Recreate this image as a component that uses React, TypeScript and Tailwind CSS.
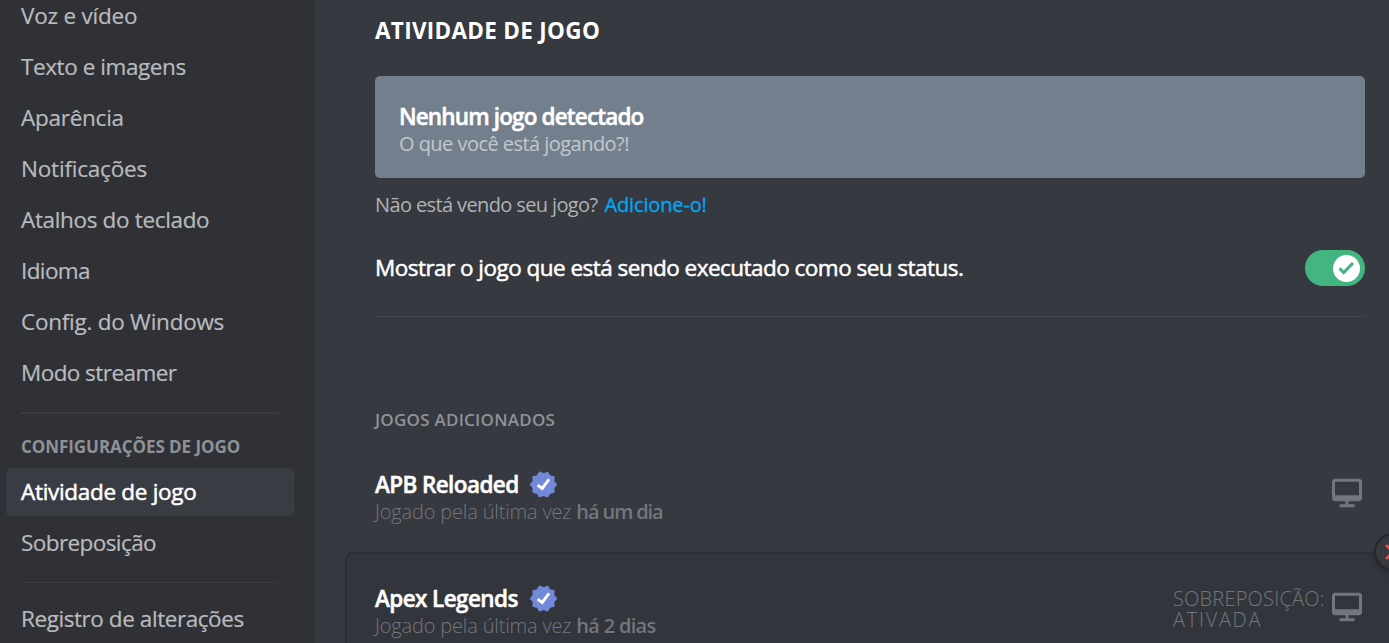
import clsx from "clsx";

const userItems = [
  { label: "Voz e vídeo", tracking: "tracking-[-0.22px]" },
  { label: "Texto e imagens", tracking: "tracking-[-0.42px]" },
  { label: "Aparência", tracking: "tracking-[-0.25px]" },
  { label: "Notificações", tracking: "tracking-[-0.2px]" },
  { label: "Atalhos do teclado", tracking: "tracking-[-0.34px]" },
  { label: "Idioma", tracking: "tracking-[-0.6px]" },
  { label: "Config. do Windows", tracking: "tracking-[-0.25px]" },
  { label: "Modo streamer", tracking: "tracking-[-0.56px]" },
];

const gameItems = [
  { label: "Atividade de jogo", tracking: "tracking-[-0.3px]", active: true },
  { label: "Sobreposição", tracking: "tracking-[-0.58px]" },
];

type ItemProps = { label: string; tracking?: string; active?: boolean };

function NavItem({ label, tracking, active }: ItemProps) {
  return (
    <a
      className={clsx(
        "flex h-12 shrink-0 items-center rounded-[5px] pb-px pl-[15px] text-[22.5px] whitespace-nowrap",
        active
          ? "bg-[#393c43] text-white [-webkit-text-stroke:0.5px_#fff]"
          : "text-[#b9bbbe] [-webkit-text-stroke:0.2px_#b9bbbe]",
        tracking
      )}
    >
      {label}
    </a>
  );
}

function VerifiedBadge() {
  return (
    <svg width="27" height="27" viewBox="0 0 16 15.2" className="shrink-0">
      <path
        fill="#7289da"
        fillRule="evenodd"
        d="m16 7.6c0 .79-1.28 1.38-1.52 2.09s.44 2 0 2.59-1.84.35-2.46.8-.79 1.84-1.54 2.09-1.67-.8-2.47-.8-1.75 1-2.47.8-.92-1.64-1.54-2.09-2-.18-2.46-.8.23-1.84 0-2.59-1.54-1.3-1.54-2.09 1.28-1.38 1.52-2.09-.44-2 0-2.59 1.85-.35 2.48-.8.78-1.84 1.53-2.12 1.67.83 2.47.83 1.75-1 2.47-.8.91 1.64 1.53 2.09 2 .18 2.46.8-.23 1.84 0 2.59 1.54 1.3 1.54 2.09z"
      />
      <path
        fill="#fff"
        d="M7.4 11.17 4 8.62l1-1.36 2 1.53L10.64 4l1.36 1z"
      />
    </svg>
  );
}

function Monitor() {
  return (
    <svg width="36" height="36" viewBox="0 0 24 24" className="shrink-0">
      <path
        fill="#72767d"
        d="M4 2.5C2.897 2.5 2 3.397 2 4.5V15.5C2 16.604 2.897 17.5 4 17.5H11V19.5H7V21.5H17V19.5H13V17.5H20C21.103 17.5 22 16.604 22 15.5V4.5C22 3.397 21.103 2.5 20 2.5H4ZM20 4.5V13.5H4V4.5H20Z"
      />
    </svg>
  );
}

type GameProps = { name: string; nameTracking?: string; last: string; lastTracking?: string };

function GameInfo({ name, nameTracking, last, lastTracking }: GameProps) {
  return (
    <div>
      <div className="flex h-[30px] items-center gap-3">
        <span
          className={clsx(
            "w-[143px] pt-px text-[22.5px] font-semibold whitespace-nowrap text-white [-webkit-text-stroke:0.5px_#fff]",
            nameTracking
          )}
        >
          {name}
        </span>
        <VerifiedBadge />
      </div>
      <div className="flex h-6 gap-[5px] text-[20px] leading-[26px] whitespace-pre text-[#72767d]">
        <span className="font-light tracking-[-0.17px]">Jogado pela última vez</span>
        <span className={clsx("font-semibold", lastTracking)}>{last}</span>
      </div>
    </div>
  );
}

export default function App() {
  return (
    <div className="flex h-[643px] w-[1389px] overflow-hidden bg-[#36393f] font-['Open_Sans','Noto_Sans',sans-serif]">
      {/* Settings sidebar */}
      <nav className="flex w-[315px] shrink-0 flex-col bg-[#2f3136] pr-[21px] pl-1.5">
        <div className="-mt-2 flex flex-col gap-[3px]">
          {userItems.map((item) => (
            <NavItem key={item.label} {...item} />
          ))}
        </div>
        <div className="mt-[15px] ml-[15px] h-0.5 w-[258px] shrink-0 bg-[#393b41]" />
        <h3 className="mt-[18px] ml-[15px] flex h-[30px] shrink-0 items-center text-[17px] font-bold tracking-[-0.06px] whitespace-nowrap text-[#8e9297]">
          CONFIGURAÇÕES DE JOGO
        </h3>
        <div className="mt-1.5 flex flex-col gap-[3px]">
          {gameItems.map((item) => (
            <NavItem key={item.label} {...item} />
          ))}
        </div>
        <div className="mt-[15px] mb-3 ml-[15px] h-px w-[258px] shrink-0 bg-[#393b41]" />
        <NavItem label="Registro de alterações" tracking="tracking-[-0.43px]" />
      </nav>

      {/* Game activity */}
      <main className="flex w-[1074px] shrink-0 flex-col pl-[30px]">
        <div className="ml-[30px] flex w-[990px] shrink-0 flex-col">
          <h2 className="mt-4 flex h-[30px] items-center pb-px text-[22.5px] font-bold tracking-[0.3px] text-white">
            ATIVIDADE DE JOGO
          </h2>

          <div className="mt-[30px] flex h-[102px] flex-col rounded-[5px] bg-[#747f8d] pt-[25px] pl-6">
            <div className="flex h-[31px] items-center text-[22.5px] leading-[30px] font-semibold tracking-[-0.86px] text-white [-webkit-text-stroke:0.5px_#fff]">
              Nenhum jogo detectado
            </div>
            <div className="flex h-6 items-center text-[20px] leading-6 tracking-[-0.54px] text-[#c3c8ce]">
              O que você está jogando?!
            </div>
          </div>

          <div className="mt-3 flex h-[30px] items-center gap-[7px] text-[20px]">
            <span className="tracking-[-0.62px] text-[#b0b2b5]">Não está vendo seu jogo?</span>
            <a className="tracking-[-0.15px] text-[#00a8f5] [-webkit-text-stroke:0.3px_#00a8f5]">Adicione-o!</a>
          </div>

          <div className="mt-[30px] flex h-9 items-center justify-between">
            <span className="text-[22.5px] tracking-[-0.53px] text-white [-webkit-text-stroke:0.5px_#fff]">
              Mostrar o jogo que está sendo executado como seu status.
            </span>
            <button className="flex h-9 w-[60px] items-center justify-end rounded-full bg-[#43b581] pr-[5px]">
              <span className="flex h-[27px] w-[27px] items-center justify-center rounded-full bg-white">
                <svg width="17" height="14" viewBox="0 0 17 14">
                  <path d="M1.6 7.4 5.7 11.5 15 2" fill="none" stroke="#43b581" strokeWidth="3.1" />
                </svg>
              </span>
            </button>
          </div>
          <div className="mt-[30px] h-px bg-[#43454a]" />

          <h3 className="mt-[88px] flex h-[30px] items-center text-[17px] font-semibold tracking-[0.25px] text-[#8e9297]">
            JOGOS ADICIONADOS
          </h3>
          <div className="mt-[34px] flex h-[83px] items-start justify-between">
            <GameInfo
              name="APB Reloaded"
              nameTracking="tracking-[-0.6px]"
              last="há um dia"
              lastTracking="tracking-[-1.1px]"
            />
            <div className="mt-1.5">
              <Monitor />
            </div>
          </div>
        </div>

        {/* Hovered row, its remove button hangs on the corner */}
        <div className="relative flex h-[114px] w-[1050px] shrink-0 items-start rounded-[8px] border-2 border-[#2c2e33] bg-[#32353b] pt-[29px] pl-7">
          <GameInfo
            name="Apex Legends"
            nameTracking="tracking-[-0.6px]"
            last="há 2 dias"
            lastTracking="tracking-[-0.7px]"
          />
          <div className="mt-1.5 ml-auto flex w-[220px] items-start">
            <div className="-mt-px w-[156px] text-[20px] leading-[21px] font-light whitespace-nowrap text-[#72767d]">
              <p className="tracking-[0.2px]">SOBREPOSIÇÃO:</p>
              <p className="tracking-[1.7px]">ATIVADA</p>
            </div>
            <Monitor />
          </div>
          <button className="absolute -top-[21px] left-[1027px] flex h-[38px] w-[38px] items-center justify-center rounded-full border-2 border-[#25272b] bg-[#36393f] shadow-md">
            <svg width="16" height="16" viewBox="0 0 16 16" className="shrink-0">
              <path d="M1 1 15 15M15 1 1 15" stroke="#f04747" strokeWidth="3" />
            </svg>
          </button>
        </div>
      </main>
    </div>
  );
}
